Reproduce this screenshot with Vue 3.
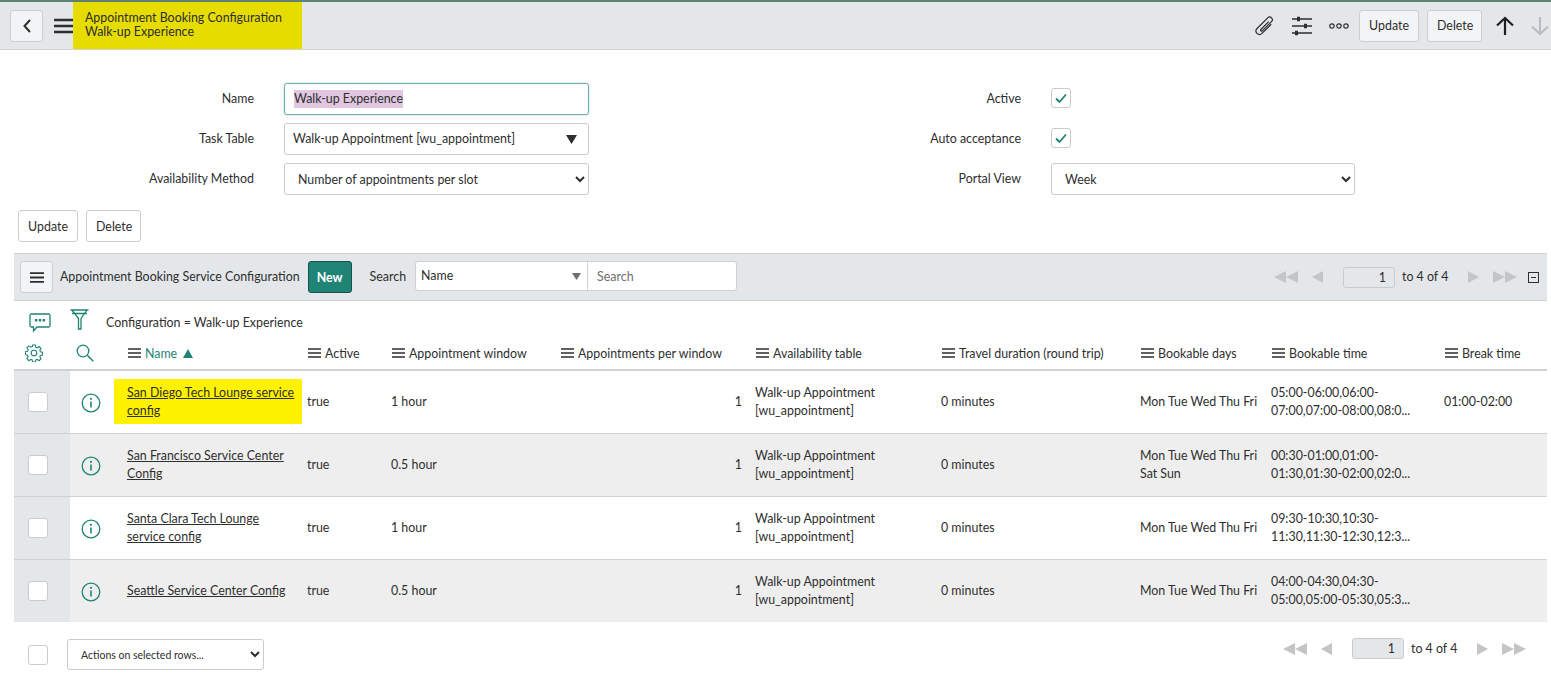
<script setup>
const columns = [
  { label: 'Name', sorted: true },
  { label: 'Active' },
  { label: 'Appointment window' },
  { label: 'Appointments per window' },
  { label: 'Availability table' },
  { label: 'Travel duration (round trip)' },
  { label: 'Bookable days' },
  { label: 'Bookable time' },
  { label: 'Break time' }
]

const rows = [
  {
    name: 'San Diego Tech Lounge service config',
    marked: true,
    active: 'true',
    window: '1 hour',
    days: 'Mon Tue Wed Thu Fri',
    time: '05:00-06:00,06:00-07:00,07:00-08:00,08:0...',
    breakTime: '01:00-02:00'
  },
  {
    name: 'San Francisco Service Center Config',
    active: 'true',
    window: '0.5 hour',
    days: 'Mon Tue Wed Thu Fri Sat Sun',
    time: '00:30-01:00,01:00-01:30,01:30-02:00,02:0...',
    breakTime: ''
  },
  {
    name: 'Santa Clara Tech Lounge service config',
    active: 'true',
    window: '1 hour',
    days: 'Mon Tue Wed Thu Fri',
    time: '09:30-10:30,10:30-11:30,11:30-12:30,12:3...',
    breakTime: ''
  },
  {
    name: 'Seattle Service Center Config',
    active: 'true',
    window: '0.5 hour',
    days: 'Mon Tue Wed Thu Fri',
    time: '04:00-04:30,04:30-05:00,05:00-05:30,05:3...',
    breakTime: ''
  }
]
</script>

<template>
  <div class="page">
    <header class="top-bar">
      <button class="icon-btn back-btn">
        <svg width="10" height="16" viewBox="0 0 10 16"><path d="M8 2 2.500 8 8 14" fill="none" stroke="#2e2e2e" stroke-width="2" /></svg>
      </button>
      <svg class="burger" width="20" height="16" viewBox="0 0 20 16"><path d="M0 2h20M0 8h20M0 14h20" stroke="#2e2e2e" stroke-width="2.600" /></svg>
      <div class="title-block">
        <div>Appointment Booking Configuration</div>
        <div>Walk-up Experience</div>
      </div>
      <div class="top-actions">
        <svg class="clip" width="22" height="22" viewBox="0 0 22 22"><path transform="rotate(45 10.500 11)" d="M14 5v13a3.500 3.500 0 0 1-7 0V3a2.700 2.700 0 0 1 5.400 0v13a1 1 0 0 1-2 0V5" fill="none" stroke="#2e2e2e" stroke-width="1.200" /></svg>
        <svg class="sliders" width="20" height="20" viewBox="0 0 20 20">
          <path d="M0 3h20M0 10h20M0 17h20" stroke="#2e2e2e" stroke-width="1.300" />
          <path d="M5 .8h3v4.400H5zM12 7.800h3v4.400h-3zM3 14.800h3v4.400H3z" fill="#2e2e2e" />
        </svg>
        <svg class="dots" width="20" height="6" viewBox="0 0 20 6">
          <circle cx="3" cy="3" r="2.200" fill="none" stroke="#2e2e2e" stroke-width="1.200" />
          <circle cx="10" cy="3" r="2.200" fill="none" stroke="#2e2e2e" stroke-width="1.200" />
          <circle cx="17" cy="3" r="2.200" fill="none" stroke="#2e2e2e" stroke-width="1.200" />
        </svg>
        <button class="btn top-update">Update</button>
        <button class="btn top-delete">Delete</button>
        <svg class="arrow-up" width="20" height="20" viewBox="0 0 20 20"><path d="M10 19V2M2 9.500 10 2l8 7.500" fill="none" stroke="#1f1f1f" stroke-width="2.200" /></svg>
        <svg class="arrow-down" width="20" height="20" viewBox="0 0 20 20"><path d="M10 1v17M2 10.500 10 18l8-7.500" fill="none" stroke="#b9bdc1" stroke-width="2.200" /></svg>
      </div>
    </header>

    <section class="form">
      <div class="form-col">
        <label>Name</label>
        <div class="field name-field"><span class="selected">Walk-up Experience</span></div>
        <label>Task Table</label>
        <div class="field table-field">
          <span>Walk-up Appointment [wu_appointment]</span>
          <svg width="11" height="9" viewBox="0 0 11 9"><path d="M0 0h11L5.500 9z" fill="#2e2e2e" /></svg>
        </div>
        <label>Availability Method</label>
        <select class="field select-field">
          <option>Number of appointments per slot</option>
        </select>
      </div>
      <div class="form-col right-col">
        <label>Active</label>
        <div class="check-wrap">
          <span class="check">
            <svg width="14" height="12" viewBox="0 0 14 12"><path d="M2 6.500 5.500 10 12 2.500" fill="none" stroke="#1f8476" stroke-width="1.800" /></svg>
          </span>
        </div>
        <label>Auto acceptance</label>
        <div class="check-wrap">
          <span class="check">
            <svg width="14" height="12" viewBox="0 0 14 12"><path d="M2 6.500 5.500 10 12 2.500" fill="none" stroke="#1f8476" stroke-width="1.800" /></svg>
          </span>
        </div>
        <label>Portal View</label>
        <select class="field select-field">
          <option>Week</option>
        </select>
      </div>
    </section>

    <div class="form-buttons">
      <button class="btn">Update</button>
      <button class="btn">Delete</button>
    </div>

    <div class="list-bar">
      <button class="icon-btn list-menu">
        <svg width="14" height="11" viewBox="0 0 14 11"><path d="M0 1.200h14M0 5.500h14M0 9.800h14" stroke="#2e2e2e" stroke-width="1.800" /></svg>
      </button>
      <span class="list-title">Appointment Booking Service Configuration</span>
      <button class="new-btn">New</button>
      <span class="search-label">Search</span>
      <div class="search-group">
        <div class="search-col">
          <span>Name</span>
          <svg width="9" height="7" viewBox="0 0 9 7"><path d="M0 0h9L4.500 7z" fill="#6f6f6f" /></svg>
        </div>
        <div class="search-input">Search</div>
      </div>
      <div class="pager">
        <svg class="pg-first" width="24" height="12" viewBox="0 0 24 12"><path d="M12 0v12L0 6zM24 0v12L12 6z" fill="#c3c5c7" /></svg>
        <svg class="pg-prev" width="11" height="12" viewBox="0 0 11 12"><path d="M11 0v12L0 6z" fill="#c3c5c7" /></svg>
        <div class="pg-input">1</div>
        <span class="pg-text">to 4 of 4</span>
        <svg class="pg-next" width="11" height="12" viewBox="0 0 11 12"><path d="M0 0v12l11-6z" fill="#c3c5c7" /></svg>
        <svg class="pg-last" width="24" height="12" viewBox="0 0 24 12"><path d="M0 0v12l12-6zM12 0v12l12-6z" fill="#c3c5c7" /></svg>
      </div>
      <span class="collapse"></span>
    </div>

    <div class="filter-row">
      <svg class="chat" width="22" height="19" viewBox="0 0 22 19">
        <path d="M2.500 1h17A1.500 1.500 0 0 1 21 2.500v10a1.500 1.500 0 0 1-1.500 1.500H8l-3.500 4v-4h-2A1.500 1.500 0 0 1 1 12.500v-10A1.500 1.500 0 0 1 2.500 1z" fill="none" stroke="#1f8476" stroke-width="1.300" />
        <path d="M6 6h2.400v2.400H6zM9.800 6h2.400v2.400H9.800zM13.600 6H16v2.400h-2.400z" fill="#1f8476" />
      </svg>
      <svg class="funnel" width="19" height="21" viewBox="0 0 19 21">
        <path d="M.5 1h18M2 4.500h15M2 1l6.500 8.500V20h2.500V9.500L17 1" fill="none" stroke="#1f8476" stroke-width="1.300" />
      </svg>
      <span class="filter-text">Configuration = Walk-up Experience</span>
    </div>

    <table class="list">
      <colgroup>
        <col class="c-check" />
        <col class="c-info" />
        <col class="c-name" />
        <col class="c-active" />
        <col class="c-window" />
        <col class="c-count" />
        <col class="c-table" />
        <col class="c-travel" />
        <col class="c-days" />
        <col class="c-time" />
        <col class="c-break" />
      </colgroup>
      <thead>
        <tr>
          <th class="tool-cell">
            <svg class="gear" width="18" height="18" viewBox="0 0 18 18">
              <path d="M7.600 1h2.800l.4 2.200 1.400.6 1.900-1.300 2 2-1.300 1.900.6 1.400 2.100.4v2.800l-2.100.4-.6 1.400 1.300 1.900-2 2-1.900-1.300-1.400.6-.4 2.100H7.600l-.4-2.100-1.400-.6-1.900 1.300-2-2 1.300-1.900-.6-1.400L.5 10.400V7.600l2.100-.4.6-1.400-1.300-1.900 2-2 1.900 1.300 1.400-.6z" fill="none" stroke="#1f8476" stroke-width="1.100" />
              <circle cx="9" cy="9" r="2.800" fill="none" stroke="#1f8476" stroke-width="1.100" />
            </svg>
          </th>
          <th class="tool-cell">
            <svg width="18" height="18" viewBox="0 0 18 18">
              <circle cx="7" cy="7" r="5.800" fill="none" stroke="#1f8476" stroke-width="1.300" />
              <path d="m11.300 11.300 6 6" stroke="#1f8476" stroke-width="1.500" />
            </svg>
          </th>
          <th v-for="col in columns" :key="col.label" :class="{ sorted: col.sorted }">
            <svg width="13" height="10" viewBox="0 0 13 10"><path d="M0 1h13M0 5h13M0 9h13" stroke="#2e2e2e" stroke-width="1.700" /></svg>
            <span>{{ col.label }}</span>
            <svg v-if="col.sorted" class="sort-mark" width="10" height="9" viewBox="0 0 10 9"><path d="M5 0l5 9H0z" fill="#1f8476" /></svg>
          </th>
        </tr>
      </thead>
      <tbody>
        <tr v-for="row in rows" :key="row.name">
          <td class="check-cell"><span class="box"></span></td>
          <td class="info-cell">
            <svg width="20" height="20" viewBox="0 0 20 20">
              <circle cx="10" cy="10" r="8.800" fill="none" stroke="#1f8476" stroke-width="1.300" />
              <path d="M10 8.500v6" stroke="#1f8476" stroke-width="1.600" />
              <circle cx="10" cy="5.800" r="1.100" fill="#1f8476" />
            </svg>
          </td>
          <td class="name-cell">
            <div :class="{ marked: row.marked }"><a>{{ row.name }}</a></div>
          </td>
          <td>{{ row.active }}</td>
          <td>{{ row.window }}</td>
          <td class="count-cell">1</td>
          <td>Walk-up Appointment [wu_appointment]</td>
          <td>0 minutes</td>
          <td>{{ row.days }}</td>
          <td class="time-cell">{{ row.time }}</td>
          <td>{{ row.breakTime }}</td>
        </tr>
      </tbody>
    </table>

    <footer class="list-foot">
      <span class="box foot-box"></span>
      <select class="actions">
        <option>Actions on selected rows...</option>
      </select>
      <div class="pager foot-pager">
        <svg class="pg-first" width="24" height="12" viewBox="0 0 24 12"><path d="M12 0v12L0 6zM24 0v12L12 6z" fill="#c3c5c7" /></svg>
        <svg class="pg-prev" width="11" height="12" viewBox="0 0 11 12"><path d="M11 0v12L0 6z" fill="#c3c5c7" /></svg>
        <div class="pg-input">1</div>
        <span class="pg-text">to 4 of 4</span>
        <svg class="pg-next" width="11" height="12" viewBox="0 0 11 12"><path d="M0 0v12l11-6z" fill="#c3c5c7" /></svg>
        <svg class="pg-last" width="24" height="12" viewBox="0 0 24 12"><path d="M0 0v12l12-6zM12 0v12l12-6z" fill="#c3c5c7" /></svg>
      </div>
    </footer>
  </div>
</template>

<style>
html,
body {
  margin: 0;
  background: #fff;
  overflow: hidden;
}
</style>

<style scoped>
.page {
  width: 1551px;
  height: 674px;
  overflow: hidden;
  font-family: Lato, "Liberation Sans", sans-serif;
  font-size: 12.4px;
  line-height: 18px;
  color: #2e2e2e;
}

svg {
  display: block;
  flex-shrink: 0;
}

button,
select {
  font-family: inherit;
  color: inherit;
}

.top-bar {
  height: 47px;
  display: flex;
  align-items: center;
  padding-left: 10px;
  background: #e4e7ea;
  border-top: 2px solid #5c8272;
  border-bottom: 1px solid #cfd1d3;
}

.icon-btn {
  display: flex;
  align-items: center;
  justify-content: center;
  padding: 0;
  background: #f3f4f6;
  border: 1px solid #cbced1;
  border-radius: 3px;
}

.back-btn {
  width: 33px;
  height: 32px;
}

.burger {
  margin-left: 11px;
}

.title-block {
  align-self: stretch;
  width: 217px;
  margin-left: -1px;
  padding: 9px 0 0 12px;
  background: #e6dc00;
  line-height: 13.500px;
}

.top-actions {
  margin-left: auto;
  display: flex;
  align-items: center;
}

.sliders {
  margin-left: 16px;
}

.dots {
  margin-left: 17px;
}

.btn {
  height: 32px;
  padding: 0 9px;
  background: #f3f4f6;
  border: 1px solid #cbced1;
  border-radius: 3px;
  font-size: 12.4px;
}

.top-update {
  width: 60px;
  margin-left: 10px;
}

.top-delete {
  width: 55px;
  margin-left: 8px;
}

.arrow-up {
  margin-left: 13px;
}

.arrow-down {
  margin-left: 15px;
  margin-right: 1px;
}

.form {
  display: flex;
  gap: 192px;
  padding: 33px 0 0 14px;
}

.form-col {
  display: grid;
  grid-template-columns: 240px 305px;
  column-gap: 30px;
  row-gap: 8px;
  align-items: center;
}

.right-col {
  grid-template-columns: 240px 304px;
}

.form-col label {
  padding-bottom: 1px;
  text-align: right;
}

.field {
  box-sizing: border-box;
  height: 32px;
  width: 100%;
  display: flex;
  align-items: center;
  background: #fff;
  border: 1px solid #c9cbcd;
  border-radius: 3px;
  font-size: 12.4px;
}

.name-field {
  padding-left: 9px;
  border-color: #6fb0a4;
  box-shadow: 0 0 2px rgba(31, 132, 118, 0.4);
}

.selected {
  background: #e0c6df;
}

.table-field {
  justify-content: space-between;
  padding: 0 11px 0 8px;
}

.select-field {
  padding-left: 9px;
}

.check-wrap {
  height: 32px;
  display: flex;
  align-items: center;
  padding-bottom: 2px;
  box-sizing: border-box;
}

.check {
  box-sizing: border-box;
  width: 20px;
  height: 20px;
  display: flex;
  align-items: center;
  justify-content: center;
  border: 1px solid #c9cbcd;
  border-radius: 3px;
}

.form-buttons {
  display: flex;
  gap: 8px;
  padding: 15px 0 0 18px;
}

.form-buttons .btn {
  background: #fff;
}

.form-buttons .btn:first-child {
  width: 60px;
}

.form-buttons .btn:last-child {
  width: 55px;
}

.list-bar {
  box-sizing: border-box;
  width: 1533px;
  height: 48px;
  margin: 11px 0 0 14px;
  display: flex;
  align-items: center;
  padding-left: 6px;
  background: #e4e7ea;
  border: 1px solid #cfd1d3;
  border-left: 0;
  border-right: 0;
}

.list-menu {
  width: 33px;
  height: 32px;
}

.list-title {
  margin-left: 7px;
}

.new-btn {
  width: 44px;
  height: 32px;
  margin-left: 8px;
  padding: 0;
  background: #1f8476;
  border: 1px solid #17544b;
  border-radius: 3px;
  color: #fff;
  font-size: 12.4px;
  font-weight: 700;
}

.search-label {
  margin-left: 18px;
}

.search-group {
  display: flex;
  height: 30px;
  margin: 0 0 2px 9px;
  background: #fff;
  border: 1px solid #cfd1d3;
  border-radius: 3px;
  box-sizing: border-box;
}

.search-col {
  width: 172px;
  box-sizing: border-box;
  display: flex;
  align-items: center;
  justify-content: space-between;
  padding: 0 6px 0 5px;
  border-right: 1px solid #cfd1d3;
}

.search-input {
  width: 148px;
  box-sizing: border-box;
  display: flex;
  align-items: center;
  padding: 2px 0 0 9px;
  color: #6f6f6f;
}

.pager {
  margin-left: auto;
  display: flex;
  align-items: center;
}

.pg-prev {
  margin-left: 14px;
}

.pg-input {
  box-sizing: border-box;
  width: 52px;
  height: 21px;
  margin-left: 20px;
  padding-right: 8px;
  line-height: 19px;
  text-align: right;
  background: #e4e7ea;
  border: 1px solid #c9cbcd;
  border-radius: 3px;
}

.pg-text {
  width: 66px;
  margin-left: 7px;
}

.pg-last {
  margin-left: 14px;
}

.collapse {
  box-sizing: border-box;
  width: 11px;
  height: 11px;
  margin: 0 8px 0 11px;
  border: 1px solid #2e2e2e;
  position: relative;
}

.collapse::after {
  content: "";
  position: absolute;
  left: 2px;
  right: 2px;
  top: 4px;
  height: 1px;
  background: #2e2e2e;
}

.filter-row {
  height: 39px;
  display: flex;
  align-items: center;
  padding-left: 29px;
}

.chat {
  margin-top: 4px;
}

.funnel {
  margin: -2px 17px 0 19px;
}

.filter-text {
  margin-top: 5px;
}

.list {
  width: 1533px;
  margin-left: 14px;
  table-layout: fixed;
  border-collapse: separate;
  border-spacing: 0;
}

.c-check { width: 56px; }
.c-info { width: 44px; }
.c-name { width: 188px; }
.c-active { width: 84px; }
.c-window { width: 169px; }
.c-count { width: 195px; }
.c-table { width: 186px; }
.c-travel { width: 199px; }
.c-days { width: 131px; }
.c-time { width: 173px; }
.c-break { width: 108px; }

.list th {
  box-sizing: border-box;
  height: 31px;
  padding: 0 5px 2px 6px;
  border-bottom: 2px solid #cfd1d3;
  font-weight: 400;
  text-align: left;
  white-space: nowrap;
}

.list th svg {
  display: inline-block;
  vertical-align: -0.5px;
  margin-right: 4px;
}

.list th:nth-child(3) {
  padding-left: 14px;
}

.list th.sorted span {
  color: #1f8476;
}

.list th .sort-mark {
  margin: 0 0 0 6px;
}

.list th.tool-cell {
  padding: 0 0 4px;
}

.list th.tool-cell svg {
  display: block;
  margin: 0;
}

.list th.tool-cell:first-child svg {
  margin-left: 11px;
}

.list th.tool-cell:nth-child(2) svg {
  margin-left: 6px;
}

.list td {
  box-sizing: border-box;
  height: 63px;
  padding: 0 5px 1px;
  border-bottom: 1px solid #cfd1d3;
  vertical-align: middle;
}

.list tbody tr:last-child td {
  height: 62px;
  border-bottom: 0;
}

.list tbody tr:nth-child(even) td {
  background: #eeeeee;
}

.list tbody tr td.check-cell {
  padding: 0 0 0 14px;
  background: #e4e7ea;
}

.box {
  display: block;
  box-sizing: border-box;
  width: 20px;
  height: 20px;
  background: #fff;
  border: 1px solid #c9cbcd;
  border-radius: 3px;
}

.list td.info-cell {
  padding: 2px 0 0 11px;
}

.list td.name-cell {
  padding: 0 0 2px;
}

.name-cell div {
  padding: 5px 5px 4px 13px;
}

.name-cell .marked {
  background: #fff200;
}

.name-cell a {
  text-decoration: underline;
  color: #2e2e2e;
}

.list td.count-cell {
  padding-right: 8px;
  text-align: right;
}

.list-foot {
  height: 52px;
  display: flex;
  align-items: flex-start;
  padding-left: 28px;
}

.foot-box {
  margin-top: 23px;
}

.actions {
  box-sizing: border-box;
  width: 197px;
  height: 31px;
  margin: 17px 0 0 19px;
  padding-left: 9px;
  background: #fff;
  border: 1px solid #c9cbcd;
  border-radius: 3px;
  font-size: 10.5px;
}

.foot-pager {
  margin: 16px 25px 0 auto;
}
</style>
